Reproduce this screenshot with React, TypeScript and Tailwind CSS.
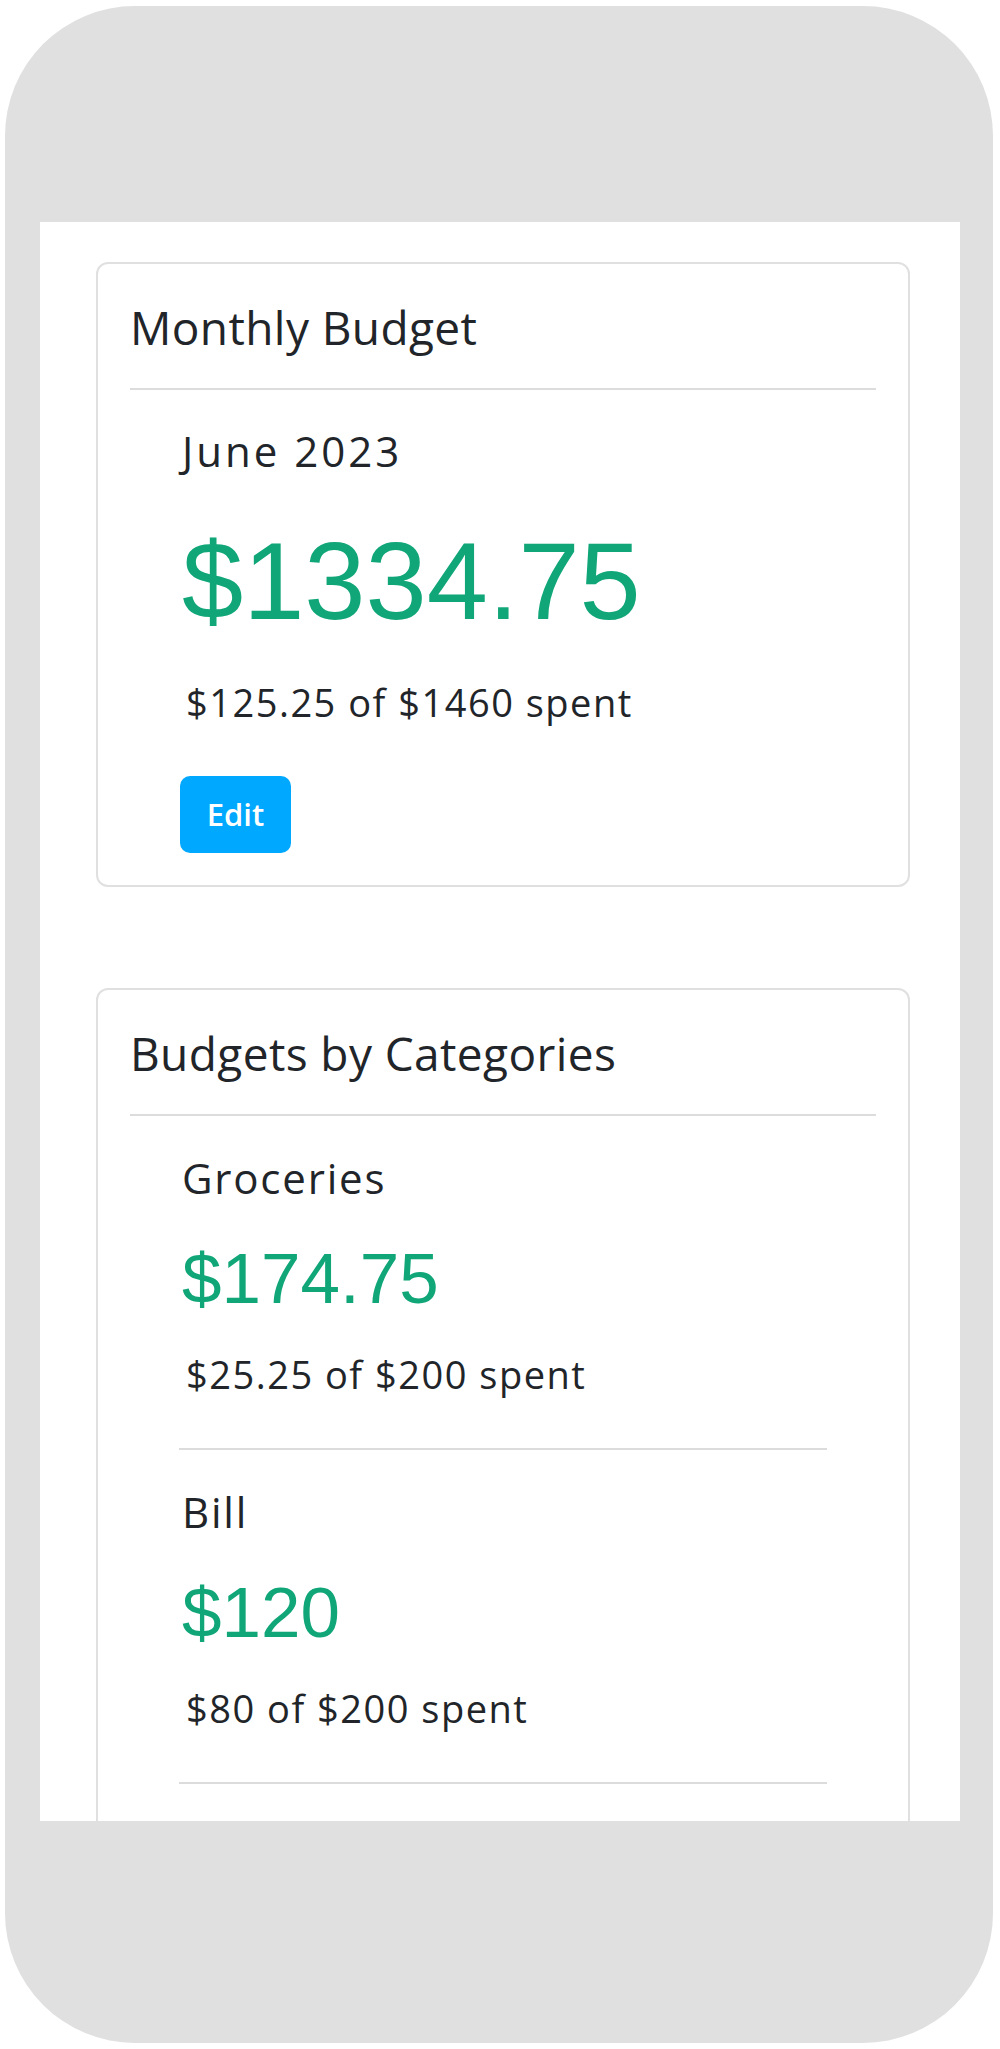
import React from "react";

const body = { fontFamily: '"Open Sans", "Noto Sans", sans-serif' };
const num = { fontFamily: '"Liberation Sans", Arial, sans-serif' };

function Header({ title }: { title: string }) {
  return (
    <div className="px-[32px] pt-[35px]">
      <div className="text-[46px] leading-[56px] tracking-[0.4px] text-[#212529]" style={body}>
        {title}
      </div>
      <div className="mt-[33px] h-[2px] bg-[#dcdcdc]" />
    </div>
  );
}

function Category({ name, amount, spent }: { name: string; amount: string; spent: string }) {
  return (
    <div>
      <div className="mt-[37px] pl-[3px] text-[42px] leading-[50px] tracking-[1.8px] text-[#212529]" style={body}>
        {name}
      </div>
      <div className="mt-[41px] pl-[3px] text-[71px] leading-[70px] text-[#10a678]" style={num}>
        {amount}
      </div>
      <div className="mt-[37px] pl-[7px] text-[38px] leading-[46px] tracking-[1.5px] text-[#212529]" style={body}>
        {spent}
      </div>
      <div className="mt-[51px] h-[2px] bg-[#dcdcdc]" />
    </div>
  );
}

export default function App() {
  return (
    <div className="w-[1000px] h-[2049px] bg-white">
      <div className="absolute left-[5px] top-[6px] w-[988px] h-[2037px] rounded-[130px] bg-[#e0e0e0]">
        <div className="ml-[35px] mt-[216px] w-[920px] h-[1599px] bg-white overflow-hidden pl-[56px] pt-[40px]">
          <div className="w-[814px] rounded-[12px] border-2 border-[#e0e0e0] bg-white">
            <Header title="Monthly Budget" />
            <div className="px-[81px] pb-[32px]">
              <div className="mt-[36px] pl-[3px] text-[42px] leading-[50px] tracking-[3px] text-[#212529]" style={body}>
                June 2023
              </div>
              <div className="mt-[51px] pl-[3px] text-[110px] leading-[108px] text-[#10a678]" style={num}>
                $1334.75
              </div>
              <div className="mt-[44px] pl-[7px] text-[38px] leading-[46px] tracking-[1.5px] text-[#212529]" style={body}>
                $125.25 of $1460 spent
              </div>
              <button
                className="mt-[51px] ml-[1px] flex h-[77px] w-[111px] items-center justify-center rounded-[10px] bg-[#00a8ff] text-[31px] font-semibold text-white"
                style={body}
              >
                Edit
              </button>
            </div>
          </div>

          <div className="mt-[101px] w-[814px] rounded-[12px] border-2 border-[#e0e0e0] bg-white">
            <Header title="Budgets by Categories" />
            <div className="px-[81px] pb-[200px]">
              <Category name="Groceries" amount="$174.75" spent="$25.25 of $200 spent" />
              <Category name="Bill" amount="$120" spent="$80 of $200 spent" />
            </div>
          </div>
        </div>
      </div>
    </div>
  );
}
